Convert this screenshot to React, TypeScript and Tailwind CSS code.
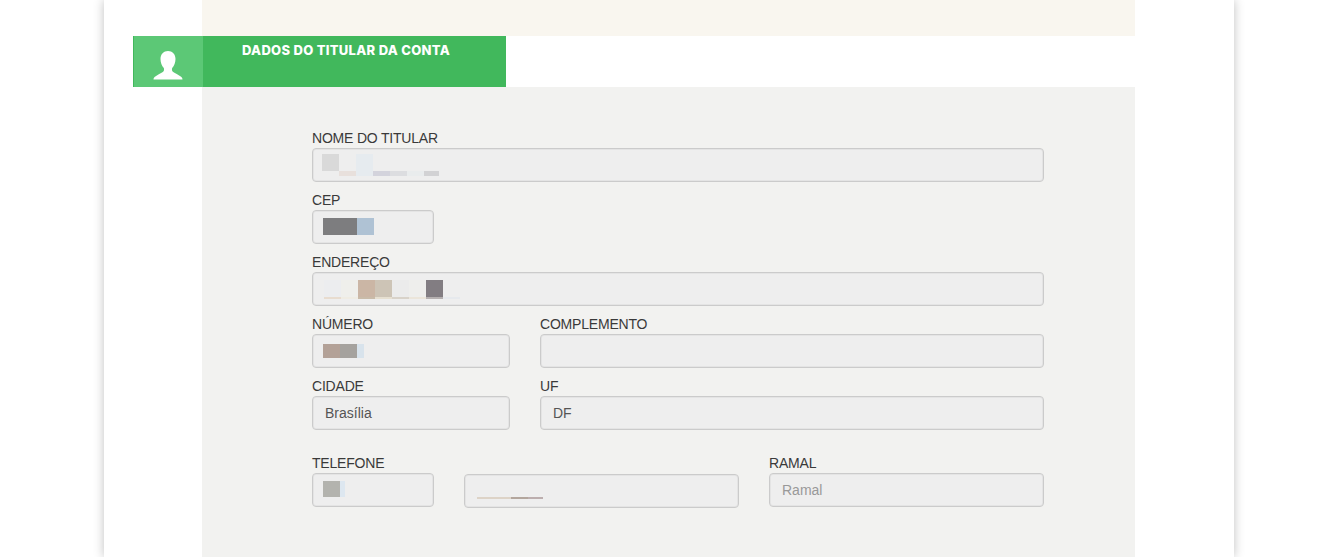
const LABEL_FONT = 'font-["Liberation_Sans",Arial,sans-serif]';

type Patch = [number, number, number, number, string];

// redacted values, blocks are page coords minus the input origin
function Input({
  value,
  placeholder,
  className = '',
  patches = [],
}: {
  value?: string;
  placeholder?: string;
  className?: string;
  patches?: Patch[];
}) {
  return (
    <div
      className={`relative flex h-[34px] items-center rounded-[4px] border border-[#cbcbcb] bg-[#eeeeee] px-3 text-sm shadow-[inset_0_0_0_1px_rgba(0,0,0,0.04)] ${className}`}
    >
      {value ? <span className="text-[#555555]">{value}</span> : null}
      {placeholder ? <span className="text-[#999999]">{placeholder}</span> : null}
      {patches.map(([x, y, w, h, color], i) => (
        <span
          key={i}
          className="absolute"
          style={{ left: x - 1, top: y - 1, width: w, height: h, background: color }}
        />
      ))}
    </div>
  );
}

function Field({ label, className = '', children }: { label: string; className?: string; children: React.ReactNode }) {
  return (
    <div className={className}>
      <label className="block h-5 text-sm leading-5 tracking-[-0.2px] text-[#3a3a3a]">{label}</label>
      {children}
    </div>
  );
}

const namePatches: Patch[] = [
  [10, 6, 17, 17, '#d9d9d9'],
  [27, 23, 17, 5, '#e8e0dc'],
  [44, 6, 17, 22, '#e6ebef'],
  [61, 23, 17, 5, '#d3d3dc'],
  [78, 23, 17, 5, '#dcdde0'],
  [95, 23, 17, 5, '#e9eced'],
  [112, 23, 15, 5, '#d2d2d4'],
];

const cepPatches: Patch[] = [
  [11, 8, 34, 17, '#7d7d7f'],
  [45, 8, 17, 17, '#afc2d4'],
];

const addressPatches: Patch[] = [
  [12, 8, 17, 17, '#ecedef'],
  [29, 8, 17, 17, '#efefeb'],
  [46, 8, 17, 17, '#cbb6a5'],
  [63, 8, 17, 17, '#cdc4b6'],
  [80, 8, 17, 17, '#ebebeb'],
  [97, 8, 17, 17, '#eeeeec'],
  [114, 8, 17, 17, '#827d82'],
  [12, 25, 17, 2, '#e8dccf'],
  [29, 25, 17, 2, '#efece3'],
  [46, 25, 17, 2, '#c9bba9'],
  [63, 25, 17, 2, '#e6dfd0'],
  [80, 25, 17, 2, '#d8d2c9'],
  [97, 25, 17, 2, '#ebe5da'],
  [114, 25, 17, 2, '#b5b0b0'],
  [131, 25, 17, 2, '#e6e9ed'],
];

const numberPatches: Patch[] = [
  [11, 10, 17, 14, '#b3a197'],
  [28, 10, 17, 14, '#a5a29e'],
  [45, 10, 7, 14, '#d8e3ec'],
];

const phonePatches: Patch[] = [
  [11, 8, 17, 16, '#b3b3ae'],
  [28, 8, 5, 16, '#dde7f0'],
];

const mobilePatches: Patch[] = [
  [13, 23, 34, 2, '#ddd3c7'],
  [47, 23, 17, 2, '#b3a69d'],
  [64, 23, 15, 2, '#bcaeae'],
];

export default function App() {
  return (
    <div className={`h-[557px] w-[1335px] overflow-hidden bg-white ${LABEL_FONT}`}>
      <div className="ml-[104px] h-full w-[1130px] bg-white shadow-[0_0_10px_rgba(0,0,0,0.25)]">
        <div className="ml-[98px] flex h-full w-[933px] flex-col">
          <div className="h-9 bg-[#f9f6ef]" />

          <div className="-ml-[69px] flex h-[51px] w-[373px] border-l border-[#41b85c] bg-[#41b85c]">
            <div className="flex w-[69px] items-end justify-center bg-[#5cc876] pr-0.5 pb-[7px]">
              <svg width="30" height="30" viewBox="0 0 30 30" fill="#ffffff">
                <path d="M15 1c-4.300 0-7.500 3-7.500 8 0 3.500 1.300 7 3.300 9 0.500 1.500 0.300 3-1 4-2 1.300-5 2.500-7.500 4.500-1 0.800-1.800 1.700-1.800 3h29c0-1.300-0.800-2.200-1.800-3-2.500-2-5.500-3.200-7.500-4.500-1.300-1-1.500-2.500-1-4 2-2 3.300-5.500 3.300-9 0-5-3.200-8-7.500-8z" />
              </svg>
            </div>
            <h2 className='ml-[39px] mt-[6px] font-["Inter",sans-serif] text-[13px] leading-4 font-extrabold tracking-[0.3px] text-white'>
              DADOS DO TITULAR DA CONTA
            </h2>
          </div>

          <div className="flex flex-1 flex-col gap-2 bg-[#f2f2f0] pt-[41px] pl-[110px]">
            <div className="w-[732px]">
              <Field label="NOME DO TITULAR">
                <Input patches={namePatches} />
              </Field>
            </div>
            <div className="w-[732px]">
              <Field label="CEP" className="w-[122px]">
                <Input patches={cepPatches} />
              </Field>
            </div>
            <div className="w-[732px]">
              <Field label="ENDEREÇO">
                <Input patches={addressPatches} />
              </Field>
            </div>
            <div className="flex w-[732px] gap-[30px]">
              <Field label="NÚMERO" className="w-[198px]">
                <Input patches={numberPatches} />
              </Field>
              <Field label="COMPLEMENTO" className="flex-1">
                <Input />
              </Field>
            </div>
            <div className="flex w-[732px] gap-[30px]">
              <Field label="CIDADE" className="w-[198px]">
                <Input value="Brasília" />
              </Field>
              <Field label="UF" className="flex-1">
                <Input value="DF" />
              </Field>
            </div>
            <div className="mt-[15px] flex w-[732px] gap-[30px]">
              <Field label="TELEFONE" className="w-[122px]">
                <Input patches={phonePatches} />
              </Field>
              <div className="w-[275px] pt-[21px]">
                <Input patches={mobilePatches} />
              </div>
              <Field label="RAMAL" className="flex-1">
                <Input placeholder="Ramal" />
              </Field>
            </div>
          </div>
        </div>
      </div>
    </div>
  );
}
